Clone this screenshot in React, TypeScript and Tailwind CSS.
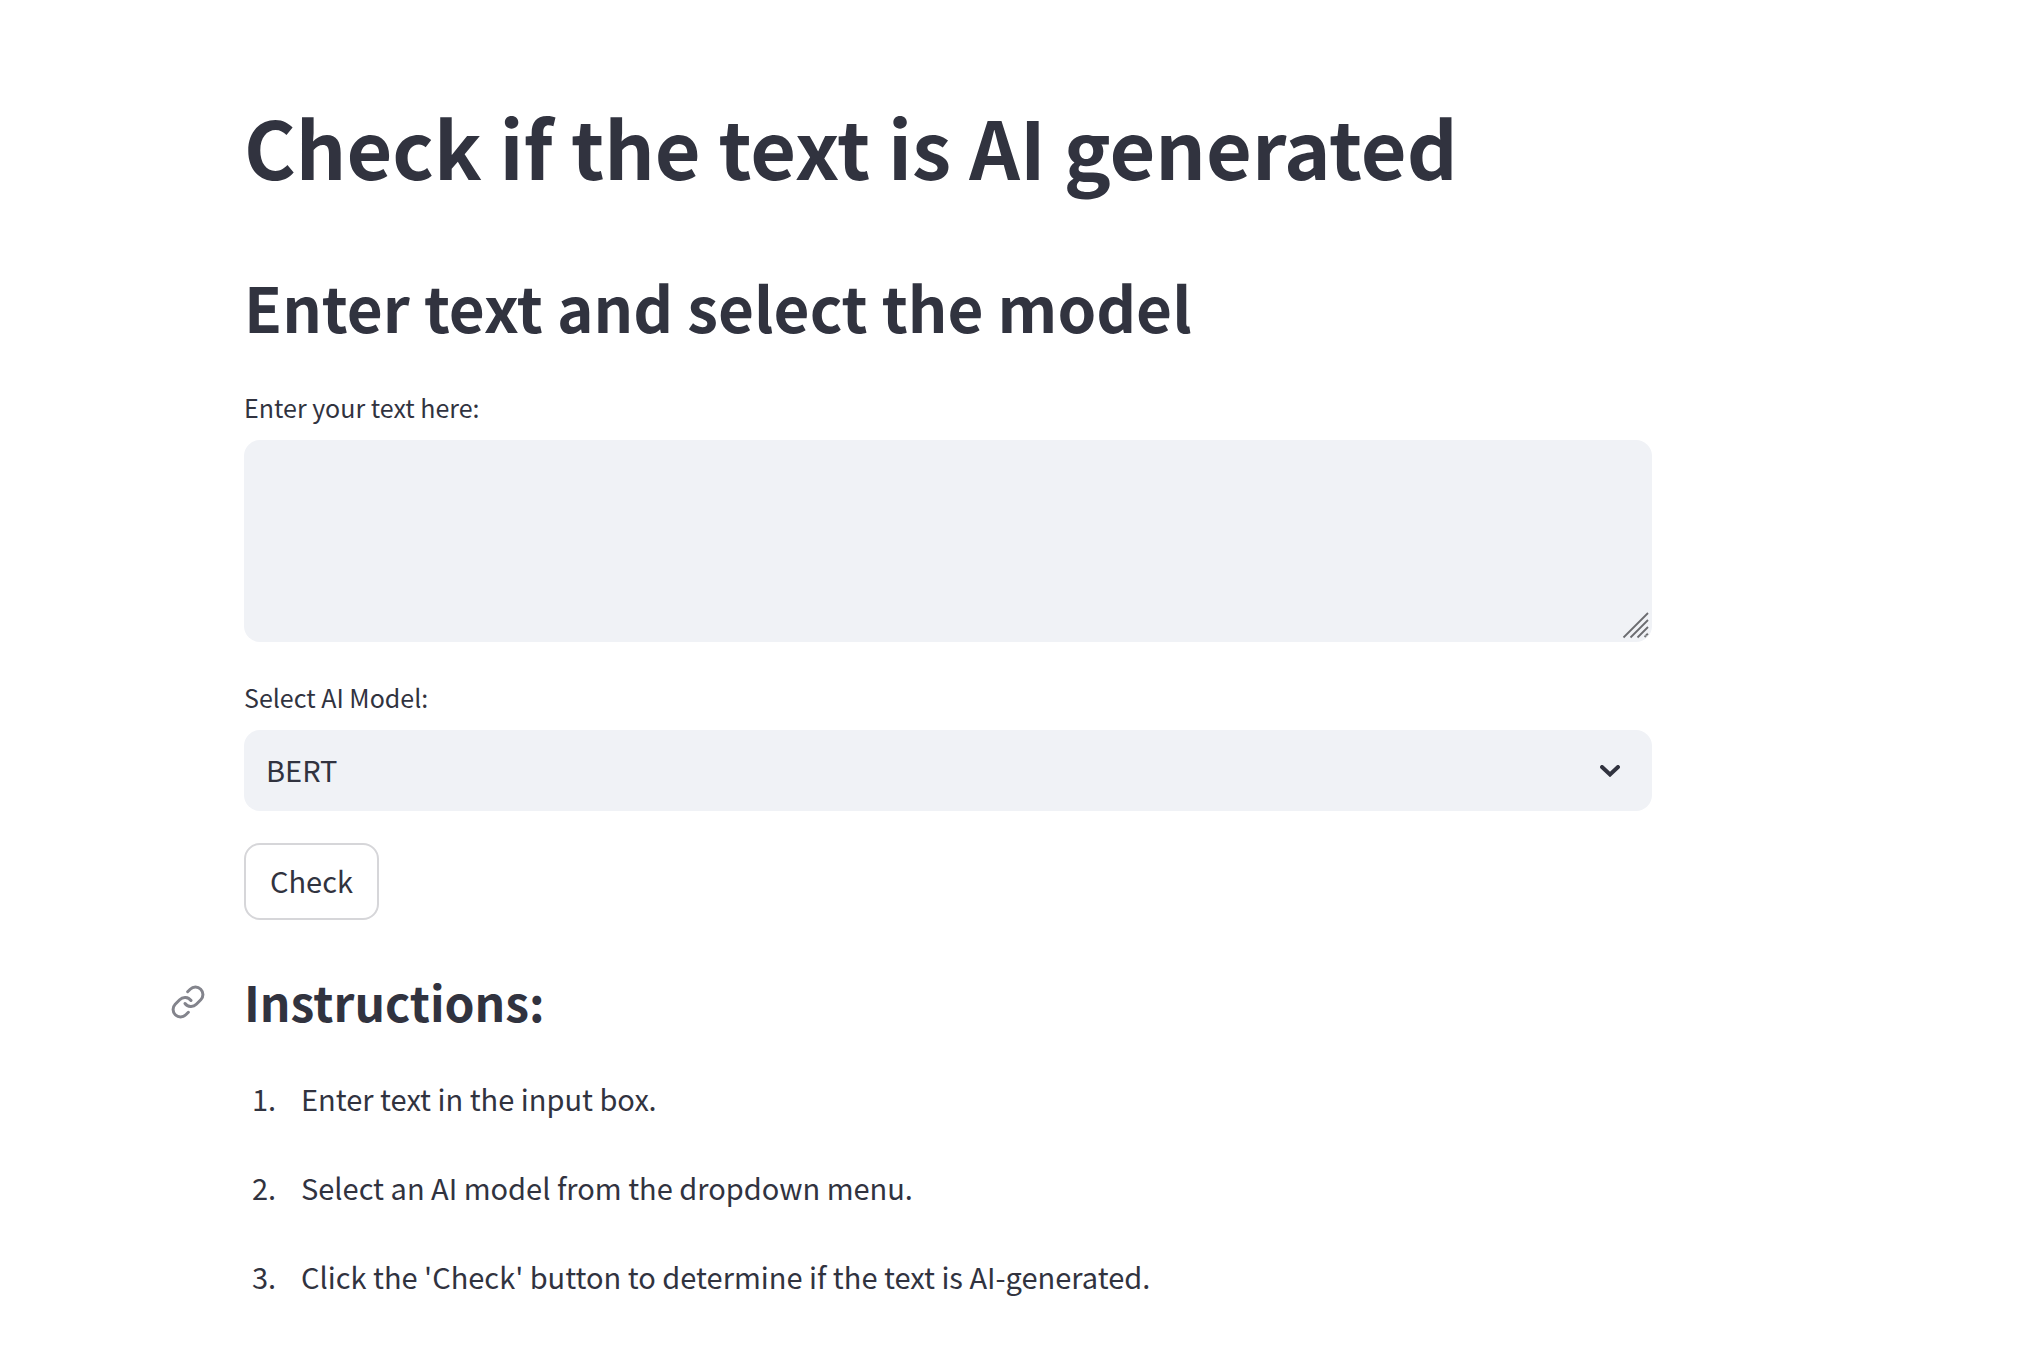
const steps = [
  "Enter text in the input box.",
  "Select an AI model from the dropdown menu.",
  "Click the 'Check' button to determine if the text is AI-generated.",
];

function LinkIcon() {
  return (
    <svg viewBox="0 0 24 24" className="size-9" fill="none" stroke="currentColor" strokeWidth="2" strokeLinecap="round" strokeLinejoin="round" aria-hidden="true">
      <path d="M10 13a5 5 0 0 0 7.54.54l3-3a5 5 0 0 0-7.07-7.07l-1.72 1.71" />
      <path d="M14 11a5 5 0 0 0-7.54-.54l-3 3a5 5 0 0 0 7.07 7.07l1.71-1.71" />
    </svg>
  );
}

function ResizeGrip() {
  return (
    <svg viewBox="0 0 28 28" className="pointer-events-none absolute right-[2px] bottom-[2px] size-7" fill="none" stroke="#6b6c70" strokeWidth="1.8" aria-hidden="true">
      <path d="M1.5 25.5 26 1M8.5 25.5 26 8M15.5 25.5 26 15M22.5 25 26 21.5" />
      <path d="M22 25.5 26.5 21" stroke="#ffffff" strokeWidth="0.8" strokeDasharray="1 1.5" />
    </svg>
  );
}

function Chevron() {
  return (
    <svg viewBox="0 0 20 12" className="pointer-events-none absolute top-[35px] right-8 h-3 w-5" fill="none" stroke="currentColor" strokeWidth="4" strokeLinecap="round" strokeLinejoin="miter" aria-hidden="true">
      <path d="M2 2 10 9.5 18 2" />
    </svg>
  );
}

export default function App() {
  return (
    <main className="min-h-screen bg-white pt-[98px] pr-[382px] pl-[244px] font-['Noto_Sans_CJK_SC','Noto_Sans',sans-serif] text-[#31333f]">
      <h1 className="text-[79px] leading-[96px] font-bold">Check if the text is AI generated</h1>
      <h2 className="mt-[72px] text-[62px] leading-[80px] font-bold">Enter text and select the model</h2>
      <label htmlFor="text" className="mt-[44px] block text-[25px] leading-[34px]">Enter your text here:</label>
      <div className="relative mt-4">
        <textarea id="text" className="block h-[202px] w-full resize-none rounded-2xl bg-[#f0f2f6] px-[22px] py-4 text-[29px] outline-none" />
        <ResizeGrip />
      </div>
      <label htmlFor="model" className="mt-[38px] block text-[25px] leading-[34px]">Select AI Model:</label>
      <div className="relative mt-4">
        <select id="model" className="block h-[81px] w-full appearance-none rounded-2xl bg-[#f0f2f6] px-[22px] pb-0.5 text-[29px] outline-none">
          <option>BERT</option>
        </select>
        <Chevron />
      </div>
      <button type="button" className="mt-8 block h-[77px] rounded-2xl border-2 border-[#d6d6d9] px-6 pb-0.5 text-[29px]">Check</button>
      <div className="relative mt-[51px]">
        <a href="#instructions" aria-label="Link to instructions" className="absolute top-[13px] -left-[74px] text-[#83848c]"><LinkIcon /></a>
        <h3 id="instructions" className="text-[48px] leading-[60px] font-bold">Instructions:</h3>
      </div>
      <ol className="mt-[43px] flex flex-col gap-[41px]">
        {steps.map((s, i) => (
          <li key={s} className="flex text-[29px] leading-[48px]">
            <span className="w-[57px] shrink-0 pl-2">{i + 1}.</span>
            {s}
          </li>
        ))}
      </ol>
    </main>
  );
}
